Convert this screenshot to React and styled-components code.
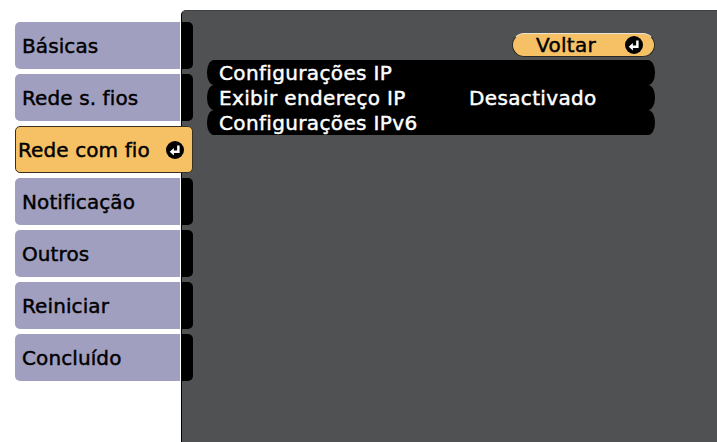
import React from "react";
import styled, { createGlobalStyle } from "styled-components";

const Global = createGlobalStyle`
  html, body { margin: 0; padding: 0; background: #ffffff; }
  body { width: 717px; height: 442px; overflow: hidden; font-family: "DejaVu Sans", "Liberation Sans", sans-serif; }
  #root { width: 717px; height: 442px; }
`;

const Screen = styled.div`
  display: flex;
  width: 717px;
  height: 442px;
  background: #ffffff;
`;

const Sidebar = styled.nav`
  position: relative;
  z-index: 1;
  display: flex;
  flex-direction: column;
  gap: 5px;
  padding: 22px 0 0 15px;
  width: 178px;
  flex: none;
`;

const Tab = styled.div`
  display: flex;
  align-items: center;
  justify-content: space-between;
  box-sizing: border-box;
  height: 47px;
  padding: 0 8px 0 ${p => (p.$active ? 2 : 7)}px;
  border-radius: 5px;
  font-size: 20px;
  color: #000;
  letter-spacing: 0.1px;
  -webkit-text-stroke: 0.45px #000;
  background: ${p =>
    p.$active
      ? "#f5c164"
      : "linear-gradient(to right, #a09fc0 0, #a09fc0 165px, #ffffff 165px, #ffffff 166px, #000 166px)"};
  border: ${p => (p.$active ? "1px solid #3a3020" : "none")};
`;

const Panel = styled.main`
  flex: 1;
  margin: 10px 0 0 -12px;
  background: #505153;
  border-left: 1px solid #000;
  border-top: 1px solid #3e3f41;
  border-top-left-radius: 5px;
  display: flex;
  flex-direction: column;
  padding: 22px 62px 0 25px;
`;

const TopBar = styled.div`
  display: flex;
  justify-content: flex-end;
  margin-bottom: 3px;
`;

const BackButton = styled.div`
  box-sizing: border-box;
  width: 143px;
  height: 24px;
  border-radius: 12px;
  background: #f5c164;
  border: 1px solid #2c2a26;
  border-top-color: #e8e4d8;
  display: flex;
  align-items: center;
  justify-content: flex-end;
  gap: 29px;
  padding-right: 11px;
  font-size: 20px;
  color: #000;
  letter-spacing: 0.3px;
  -webkit-text-stroke: 0.45px #000;
`;

const List = styled.div`
  display: flex;
  flex-direction: column;
`;

const Row = styled.div`
  display: flex;
  align-items: center;
  height: 25px;
  background: #000;
  border-radius: 7px / 12px;
  padding-left: 12px;
  color: #fff;
  font-size: 20px;
  letter-spacing: 0.35px;
  white-space: nowrap;
  -webkit-text-stroke: 0.45px #fff;
`;

const Label = styled.span`
  width: 250px;
`;

const Value = styled.span``;

const EnterIcon = ({ size = 18 }) => (
  <svg width={size} height={size} viewBox="0 0 16 16" style={{ flex: "none" }}>
    <circle cx="8" cy="8" r="8" fill="#000" />
    <path d="M11 4 V9.5 H6" stroke="#fff" strokeWidth="2.2" fill="none" />
    <polygon points="3.3,9.5 7,6.2 7,12.8" fill="#fff" />
  </svg>
);

const tabs = ["Básicas", "Rede s. fios", "Rede com fio", "Notificação", "Outros", "Reiniciar", "Concluído"];

export default function App() {
  return (
    <>
      <Global />
      <Screen>
        <Sidebar>
          {tabs.map(t => (
            <Tab key={t} $active={t === "Rede com fio"}>
              <span>{t}</span>
              {t === "Rede com fio" && <EnterIcon />}
            </Tab>
          ))}
        </Sidebar>
        <Panel>
          <TopBar>
            <BackButton>
              <span>Voltar</span>
              <EnterIcon />
            </BackButton>
          </TopBar>
          <List>
            <Row><Label>Configurações IP</Label></Row>
            <Row><Label>Exibir endereço IP</Label><Value>Desactivado</Value></Row>
            <Row><Label>Configurações IPv6</Label></Row>
          </List>
        </Panel>
      </Screen>
    </>
  );
}
